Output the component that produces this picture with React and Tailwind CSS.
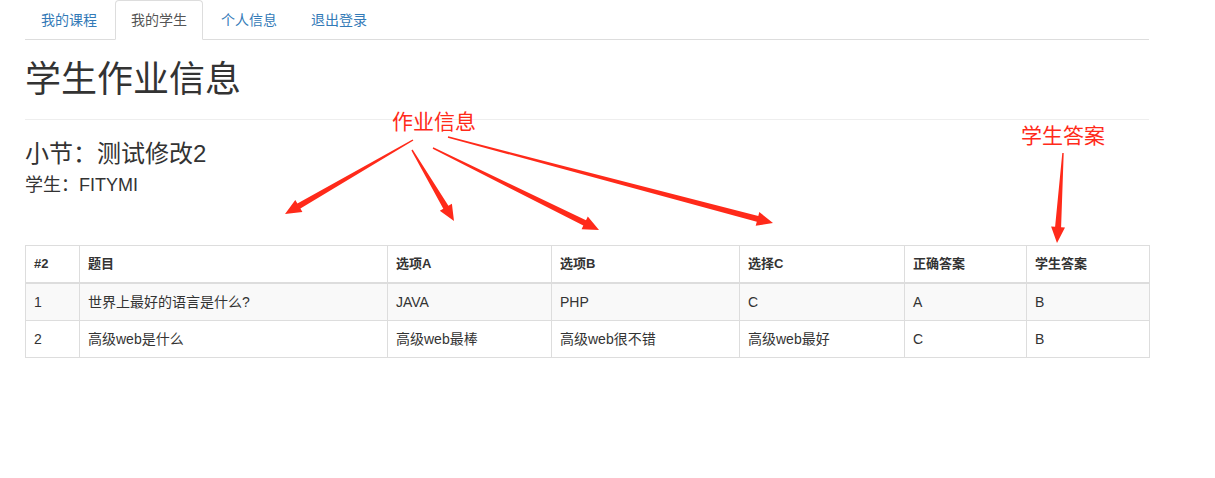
import React from 'react';

const tabs = ['我的课程', '我的学生', '个人信息', '退出登录'];

const cols = [
  { title: '#2', w: 'w-[54px]' },
  { title: '题目', w: 'w-[308px]' },
  { title: '选项A', w: 'w-[164px]' },
  { title: '选项B', w: 'w-[188px]' },
  { title: '选择C', w: 'w-[165px]' },
  { title: '正确答案', w: 'w-[122px]' },
  { title: '学生答案', w: 'w-[123px]' },
];

const rows = [
  ['1', '世界上最好的语言是什么?', 'JAVA', 'PHP', 'C', 'A', 'B'],
  ['2', '高级web是什么', '高级web最棒', '高级web很不错', '高级web最好', 'C', 'B'],
];

// tapered red arrow: thin tail, wider shaft, triangular head
const arrowPoints = (x1, y1, x2, y2, w0 = 1.5, w1 = 6, hl = 16, hw = 14) => {
  const dx = x2 - x1;
  const dy = y2 - y1;
  const len = Math.hypot(dx, dy);
  const ux = dx / len;
  const uy = dy / len;
  const nx = -uy;
  const ny = ux;
  const bx = x2 - ux * hl;
  const by = y2 - uy * hl;
  const p = [
    [x1 + (nx * w0) / 2, y1 + (ny * w0) / 2],
    [bx + (nx * w1) / 2, by + (ny * w1) / 2],
    [bx + (nx * hw) / 2, by + (ny * hw) / 2],
    [x2, y2],
    [bx - (nx * hw) / 2, by - (ny * hw) / 2],
    [bx - (nx * w1) / 2, by - (ny * w1) / 2],
    [x1 - (nx * w0) / 2, y1 - (ny * w0) / 2],
  ];
  return p.map(([a, b]) => `${a.toFixed(1)},${b.toFixed(1)}`).join(' ');
};

const arrows = [
  [413, 140, 285, 214],
  [412, 150, 454, 221],
  [433, 148, 599, 230],
  [448, 137, 773, 223],
  [1063, 153, 1057, 243],
];

export default function App() {
  return (
    <div className="relative w-[1215px] h-[478px] bg-white text-[#333] text-[14px] font-['Liberation_Sans','Noto_Sans_CJK_SC',sans-serif] overflow-hidden">
      <div className="ml-[25px] w-[1124px]">
        {/* tabs */}
        <ul className="flex h-[40px] border-b border-[#ddd]">
          {tabs.map((t, i) => (
            <li key={t} className="mr-[2px] -mb-px">
              <a
                className={
                  i === 1
                    ? 'block h-[40px] px-[15px] leading-[38px] border border-[#ddd] border-b-white bg-white text-[#555] rounded-t-[4px]'
                    : 'block h-[40px] px-[15px] leading-[38px] border border-transparent text-[#337ab7]'
                }
              >
                {t}
              </a>
            </li>
          ))}
        </ul>

        {/* page header */}
        <div className="pt-[20px] pb-[19px] border-b border-[#eee]">
          <h1 className="text-[36px] leading-[40px] font-normal">学生作业信息</h1>
        </div>

        <h3 className="mt-[21px] text-[24px] leading-[26px] font-normal">小节：测试修改2</h3>
        <div className="mt-[8px] text-[18px] leading-[20px]">学生：FITYMI</div>

        {/* table */}
        <table className="mt-[50px] w-[1124px] table-fixed border-collapse border border-[#ddd] text-[14px]">
          <colgroup>
            {cols.map((c) => (
              <col key={c.title} className={c.w} />
            ))}
          </colgroup>
          <thead>
            <tr>
              {cols.map((c) => (
                <th
                  key={c.title}
                  className="border border-[#ddd] border-b-2 px-[8px] py-[8px] leading-[20px] text-[13px] text-left font-bold"
                >
                  {c.title}
                </th>
              ))}
            </tr>
          </thead>
          <tbody>
            {rows.map((r, i) => (
              <tr key={i} className={i === 0 ? 'bg-[#f9f9f9]' : 'bg-white'}>
                {r.map((cell, j) => (
                  <td key={j} className="border border-[#ddd] px-[8px] py-[8px] leading-[20px]">
                    {cell}
                  </td>
                ))}
              </tr>
            ))}
          </tbody>
        </table>
      </div>

      {/* annotations */}
      <div className="absolute left-[392px] top-[107px] text-[21px] leading-[30px] text-[#ff2a1a]">作业信息</div>
      <div className="absolute left-[1021px] top-[121px] text-[21px] leading-[30px] text-[#ff2a1a]">学生答案</div>
      <svg className="absolute left-0 top-0 pointer-events-none" width="1215" height="478">
        {arrows.map((a, i) => (
          <polygon key={i} points={arrowPoints(...a)} fill="#ff2a1a" />
        ))}
      </svg>
    </div>
  );
}
